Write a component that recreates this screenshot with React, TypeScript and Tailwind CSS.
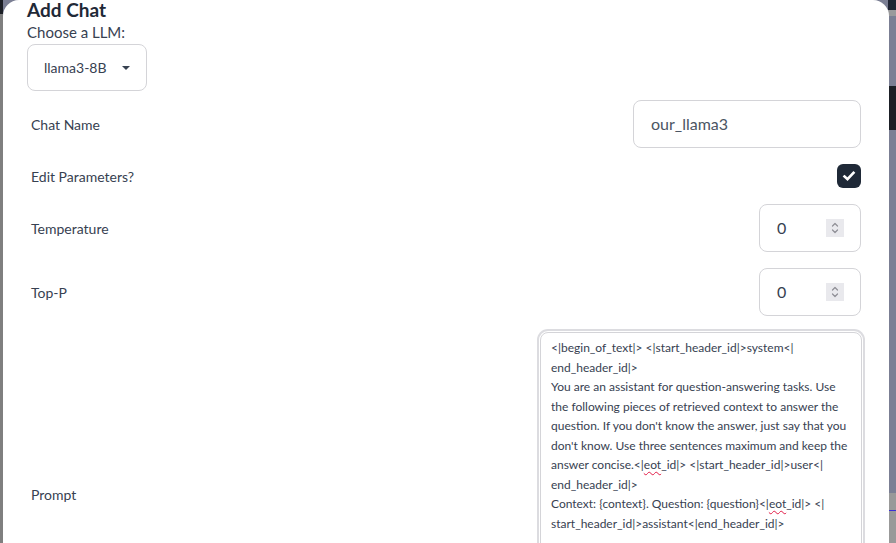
import React from 'react';

const font = { fontFamily: 'Lato, "Noto Sans", sans-serif' };

const Spinner: React.FC = () => (
    <div className="flex h-[18px] w-[18px] flex-col items-center justify-center bg-[#e9e9ed]">
        <svg width="10" height="14" viewBox="0 0 10 14" fill="none" stroke="#8e8e96" strokeWidth="1.2" strokeLinecap="round" strokeLinejoin="round">
            <path d="M2.5 5 L5 2.5 L7.5 5" />
            <path d="M2.5 9 L5 11.5 L7.5 9" />
        </svg>
    </div>
);

const NumberField: React.FC<{ value: string }> = ({ value }) => (
    <div className="flex h-12 w-[102px] items-center justify-between rounded-lg border border-[#d4d4d8] bg-white pl-[17px] pr-[16px]">
        <span className="text-base text-[#374151]">{value}</span>
        <Spinner />
    </div>
);

const Eot: React.FC = () => (
    <span className="underline decoration-wavy decoration-[#e11d48] decoration-1 underline-offset-2">eot</span>
);

const App: React.FC = () => {
    return (
        <div className="relative h-[543px] w-[896px] overflow-hidden bg-[#7b7f94]" style={font}>
            {/* dimmed page behind the modal */}
            <div className="flex h-full w-full">
                <div className="flex w-[3px] flex-col bg-[#7f7f7f]">
                    <div className="h-[14px] bg-[#1c1f26]"></div>
                </div>
                <div className="flex-1"></div>
                <div className="flex w-[8px] flex-col">
                    <div className="h-[10px] bg-[#1f2433]"></div>
                    <div className="h-[6px] bg-[#9a9a9c]"></div>
                    <div className="h-[70px] bg-[#7b7f94]"></div>
                    <div className="h-[44px] bg-[#1b1f26]"></div>
                    <div className="h-[363px] bg-[#7b7f94]"></div>
                    <div className="flex flex-1 flex-col bg-[#999999]">
                        <div className="h-[17px]"></div>
                        <div className="h-[1px] bg-[#3a2fd6]"></div>
                    </div>
                </div>
            </div>

            {/* modal */}
            <div className="absolute left-[3px] top-0 h-[720px] w-[886px] rounded-t-2xl bg-white px-6">
                <h2 className="mt-[-1px] text-[19px] font-bold leading-[21px] text-[#1f2937]">Add Chat</h2>
                <label className="block text-[15px] leading-6 text-[#374151]">Choose a LLM:</label>
                <div className="flex h-[47px] w-[120px] items-center justify-between rounded-lg border border-[#d4d4d8] pl-4 pr-4">
                    <span className="text-sm text-[#374151]">llama3-8B</span>
                    <svg width="8" height="4" viewBox="0 0 8 4"><path d="M0 0 L8 0 L4 4 Z" fill="#374151" /></svg>
                </div>

                <div className="mt-[9px] flex flex-col gap-4 px-1">
                    <div className="flex items-center justify-between">
                        <span className="pt-0.5 text-sm text-[#374151]">Chat Name</span>
                        <div className="flex h-12 w-[228px] items-center rounded-lg border border-[#d4d4d8] px-[17px]">
                            <span className="text-base text-[#4b5563]">our_llama3</span>
                        </div>
                    </div>
                    <div className="flex h-6 items-center justify-between">
                        <span className="pt-0.5 text-sm text-[#374151]">Edit Parameters?</span>
                        <div className="flex h-6 w-6 items-center justify-center rounded-md bg-[#1f2937]">
                            <svg width="14" height="14" viewBox="0 0 14 14" fill="none" stroke="white" strokeWidth="2.6" strokeLinecap="square">
                                <path d="M2.5 7.5 L5.5 10.2 L11.5 3.8" />
                            </svg>
                        </div>
                    </div>
                    <div className="flex items-center justify-between">
                        <span className="pt-0.5 text-sm text-[#374151]">Temperature</span>
                        <NumberField value="0" />
                    </div>
                    <div className="flex items-center justify-between">
                        <span className="pt-0.5 text-sm text-[#374151]">Top-P</span>
                        <NumberField value="0" />
                    </div>
                    <div className="flex items-center justify-between">
                        <span className="pt-0.5 text-sm text-[#374151]">Prompt</span>
                        <div className="-mr-px h-[323px] w-[322px] overflow-hidden whitespace-nowrap rounded-lg border border-[#d4d4d8] bg-white px-[10px] pt-[5px] text-[12px] leading-[19.5px] text-[#374151] ring-2 ring-[#dcdce0] ring-offset-1">
                            <div>{'<|begin_of_text|> <|start_header_id|>system<|'}</div>
                            <div>{'end_header_id|>'}</div>
                            <div>You are an assistant for question-answering tasks. Use</div>
                            <div>the following pieces of retrieved context to answer the</div>
                            <div>question. If you don't know the answer, just say that you</div>
                            <div>don't know. Use three sentences maximum and keep the</div>
                            <div>{'answer concise.<|'}<Eot />{'_id|> <|start_header_id|>user<|'}</div>
                            <div>{'end_header_id|>'}</div>
                            <div>{'Context: {context}. Question: {question}<|'}<Eot />{'_id|> <|'}</div>
                            <div>{'start_header_id|>assistant<|end_header_id|>'}</div>
                        </div>
                    </div>
                </div>
            </div>
        </div>
    );
};

export default App;
